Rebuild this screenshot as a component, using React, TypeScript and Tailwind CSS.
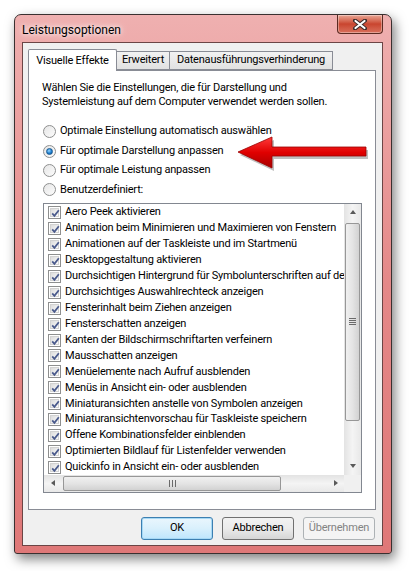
const ITEMS = [
  'Aero Peek aktivieren',
  'Animation beim Minimieren und Maximieren von Fenstern',
  'Animationen auf der Taskleiste und im Startmenü',
  'Desktopgestaltung aktivieren',
  'Durchsichtigen Hintergrund für Symbolunterschriften auf dem Desktop',
  'Durchsichtiges Auswahlrechteck anzeigen',
  'Fensterinhalt beim Ziehen anzeigen',
  'Fensterschatten anzeigen',
  'Kanten der Bildschirmschriftarten verfeinern',
  'Mausschatten anzeigen',
  'Menüelemente nach Aufruf ausblenden',
  'Menüs in Ansicht ein- oder ausblenden',
  'Miniaturansichten anstelle von Symbolen anzeigen',
  'Miniaturansichtenvorschau für Taskleiste speichern',
  'Offene Kombinationsfelder einblenden',
  'Optimierten Bildlauf für Listenfelder verwenden',
  'Quickinfo in Ansicht ein- oder ausblenden',
];

const RADIOS = [
  'Optimale Einstellung automatisch auswählen',
  'Für optimale Darstellung anpassen',
  'Für optimale Leistung anpassen',
  'Benutzerdefiniert:',
];

function Radio({ checked }: { checked?: boolean }) {
  return (
    <span className="w-[13px] h-[13px] rounded-full border border-[#8e8f8f] bg-gradient-to-br from-[#e6e6e6] to-[#fcfcfc] flex items-center justify-center shrink-0">
      {checked && (
        <span className="w-[7px] h-[7px] rounded-full bg-[radial-gradient(circle_at_40%_35%,#9ad8ff,#1d7fd0_55%,#0a4f96)] border border-[#1a5a92]" />
      )}
    </span>
  );
}

function Checkbox() {
  return (
    <span className="w-[13px] h-[13px] border border-[#8e8f8f] bg-white p-[1px] shrink-0">
      <span className="block w-full h-full border border-[#d2d2d2] bg-gradient-to-br from-[#dcdcdc] to-[#fbfbfb] relative">
        <svg width="9" height="9" viewBox="0 0 9 9" className="absolute left-0 top-0">
          <path d="M1.2 4.4 L3.4 6.8 L7.8 1.2" fill="none" stroke="#4a5a8c" strokeWidth="1.8" />
        </svg>
      </span>
    </span>
  );
}

function ScrollArrow({ dir }: { dir: 'up' | 'down' | 'left' | 'right' }) {
  const paths: Record<string, string> = {
    up: 'M1 5 L4 1 L7 5 Z',
    down: 'M1 1 L4 5 L7 1 Z',
    left: 'M5 1 L1 4 L5 7 Z',
    right: 'M1 1 L5 4 L1 7 Z',
  };
  const vertical = dir === 'up' || dir === 'down';
  return (
    <span className="w-[17px] h-[17px] flex items-center justify-center shrink-0">
      <svg width={vertical ? 8 : 6} height={vertical ? 6 : 8} viewBox={vertical ? '0 0 8 6' : '0 0 6 8'}>
        <path d={paths[dir]} fill="#5a5a5a" />
      </svg>
    </span>
  );
}

function Button({ label, primary, disabled }: { label: string; primary?: boolean; disabled?: boolean }) {
  let cls = 'border-[#707070] bg-gradient-to-b from-[#f2f2f2] via-[#ebebeb] to-[#d6d6d6] text-black';
  if (primary) cls = 'border-[#3c7fb1] bg-gradient-to-b from-[#eaf6fd] via-[#d9f0fc] to-[#bee6fd] text-black shadow-[inset_0_0_0_1px_#a7d9f5]';
  if (disabled) cls = 'border-[#adb2b5] bg-[#f4f4f4] text-[#838383]';
  return (
    <div className={`w-[72px] h-[23px] rounded-[3px] border flex items-center justify-center ${cls}`}>
      {label}
    </div>
  );
}

export default function App() {
  return (
    <div className="w-[409px] h-[571px] bg-white pt-[14px] pl-[14px] font-['Roboto',sans-serif] text-[11px] tracking-[-0.2px] text-black whitespace-nowrap">
      <div className="w-[378px] h-[540px] rounded-t-[7px] rounded-b-[3px] border border-[#3a3030] bg-gradient-to-b from-[#efb0b0] via-[#e48888] to-[#df7878] shadow-[3px_5px_12px_rgba(0,0,0,0.5)] flex flex-col">
        {/* title bar */}
        <div className="h-[27px] flex items-start shrink-0">
          <div className="pl-[7px] pt-[6px] text-[12px] tracking-[0px] [text-shadow:0_0_8px_#fff,0_0_4px_#fff] flex-1">Leistungsoptionen</div>
          <div className="mr-[8px] w-[46px] h-[19px] rounded-b-[4px] border border-t-0 border-[#5a2a22] bg-gradient-to-b from-[#e9a796] via-[#c9452f] to-[#d9705c] flex items-center justify-center shadow-[inset_0_0_0_1px_rgba(255,255,255,0.35)]">
            <svg width="14" height="11" viewBox="0 0 14 11">
              <path d="M2 1.5 L12 9.5 M12 1.5 L2 9.5" stroke="#3b2b2b" strokeWidth="4" strokeLinecap="round" />
              <path d="M2.5 2 L11.5 9 M11.5 2 L2.5 9" stroke="#ffffff" strokeWidth="2.2" strokeLinecap="round" />
            </svg>
          </div>
        </div>

        {/* client area */}
        <div className="ml-[7px] mr-[8px] mb-[7px] flex-1 border border-[#6b4545] bg-[#f0f0f0] flex flex-col">
          <div className="pl-[5px] pt-[6px] flex items-end h-[27px] relative z-10">
            <div className="w-[89px] h-[22px] mb-[-1px] border border-b-0 border-[#898c95] bg-white rounded-t-[2px] flex items-start justify-center pt-[3px]">
              Visuelle Effekte
            </div>
            <div className="w-[53px] h-[19px] border border-l-0 border-[#898c95] bg-gradient-to-b from-[#f2f2f2] to-[#e1e1e1] flex items-center justify-center">
              Erweitert
            </div>
            <div className="w-[163px] h-[19px] border border-l-0 border-[#898c95] bg-gradient-to-b from-[#f2f2f2] to-[#e1e1e1] flex items-center justify-center">
              Datenausführungsverhinderung
            </div>
          </div>

          <div className="ml-[5px] w-[348px] h-[440px] border border-[#898c95] bg-white relative flex flex-col">
            <div className="pl-[13px] pt-[10px] leading-[14px]">
              <div>Wählen Sie die Einstellungen, die für Darstellung und</div>
              <div>Systemleistung auf dem Computer verwendet werden sollen.</div>
            </div>

            <div className="mt-[13px] pl-[14px] flex flex-col">
              {RADIOS.map((r, i) => (
                <div key={r} className="h-[19.4px] flex items-center gap-[4px]">
                  <Radio checked={i === 1} />
                  <span>{r}</span>
                </div>
              ))}
            </div>

            <div className="ml-[14px] mt-[3px] w-[319px] h-[290px] border border-[#828790] bg-white flex flex-col">
              <div className="flex flex-1 min-h-0">
                <div className="flex-1 overflow-hidden pt-[1px]">
                  {ITEMS.map((t) => (
                    <div key={t} className="h-[15.94px] flex items-center gap-[4px] pl-[4px]">
                      <Checkbox />
                      <span>{t}</span>
                    </div>
                  ))}
                </div>
                <div className="w-[17px] bg-gradient-to-r from-[#e3e3e3] via-[#f4f4f4] to-[#e8e8e8] flex flex-col">
                  <ScrollArrow dir="up" />
                  <div className="mt-[2px] h-[198px] mx-[1px] rounded-[2px] border border-[#979797] bg-gradient-to-r from-[#f0f0f0] via-[#e4e4e4] to-[#d2d2d2] flex items-center justify-center">
                    <div className="flex flex-col gap-[1px]">
                      <span className="w-[7px] h-[1px] bg-[#6a6a6a]" />
                      <span className="w-[7px] h-[1px] bg-[#6a6a6a]" />
                      <span className="w-[7px] h-[1px] bg-[#6a6a6a]" />
                      <span className="w-[7px] h-[1px] bg-[#6a6a6a]" />
                    </div>
                  </div>
                  <div className="flex-1" />
                  <ScrollArrow dir="down" />
                </div>
              </div>
              <div className="h-[17px] flex bg-gradient-to-b from-[#e3e3e3] via-[#f4f4f4] to-[#e8e8e8]">
                <ScrollArrow dir="left" />
                <div className="ml-[2px] w-[218px] my-[1px] rounded-[2px] border border-[#979797] bg-gradient-to-b from-[#f0f0f0] via-[#e4e4e4] to-[#d2d2d2] flex items-center justify-center gap-[1px]">
                  <span className="w-[1px] h-[7px] bg-[#6a6a6a]" />
                  <span className="w-[1px] h-[7px] bg-[#6a6a6a] ml-[1px]" />
                  <span className="w-[1px] h-[7px] bg-[#6a6a6a] ml-[1px]" />
                </div>
                <div className="flex-1" />
                <ScrollArrow dir="right" />
                <div className="w-[17px] bg-[#f0f0f0]" />
              </div>
            </div>

            {/* red annotation arrow */}
            <svg width="140" height="44" viewBox="0 0 140 44" className="absolute left-[204px] top-[61px]">
              <defs>
                <linearGradient id="ar" x1="0" y1="0" x2="0" y2="1">
                  <stop offset="0" stopColor="#ff3b3b" />
                  <stop offset="0.5" stopColor="#e00000" />
                  <stop offset="1" stopColor="#a80000" />
                </linearGradient>
              </defs>
              <path d="M7 23 L41 8 L41 18 L135 18 L135 27 L41 27 L41 39 Z" fill="rgba(0,0,0,0.25)" />
              <path d="M5 20 L39 5 L39 15 L133 15 L133 24 L39 24 L39 36 Z" fill="url(#ar)" stroke="#9a0000" strokeWidth="0.8" />
            </svg>
          </div>

          <div className="mt-[7px] flex justify-end gap-[9px] pr-[7px]">
            <Button label="OK" primary />
            <Button label="Abbrechen" />
            <Button label="Übernehmen" disabled />
          </div>
        </div>
      </div>
    </div>
  );
}
